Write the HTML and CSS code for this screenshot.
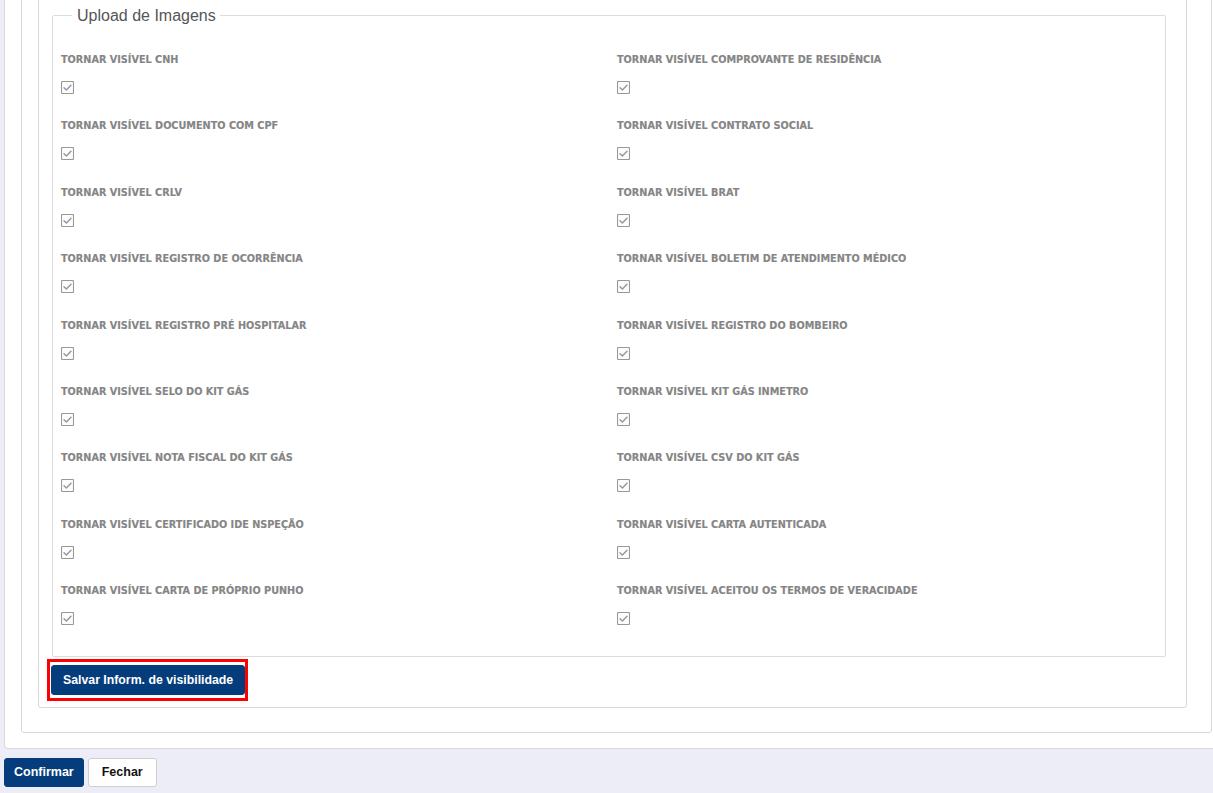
FILE: index.html
```html
<!DOCTYPE html>
<html lang="pt-BR">
<head>
<meta charset="utf-8">
<title>Upload de Imagens</title>
<link rel="stylesheet" href="styles.css">
</head>
<body>
<div class="page">
  <div class="card">
    <div class="panel">
      <div class="section">
        <fieldset class="uploads">
          <legend>Upload de Imagens</legend>
          <div class="grid">
            <div class="item"><span class="lbl">TORNAR VISÍVEL CNH</span><svg class="chk" viewBox="0 0 13 13"><rect x="0.5" y="0.5" width="12" height="12" rx="1"/><polyline points="3,6.7 5.4,9 10,4.2"/></svg></div>
            <div class="item"><span class="lbl">TORNAR VISÍVEL COMPROVANTE DE RESIDÊNCIA</span><svg class="chk" viewBox="0 0 13 13"><rect x="0.5" y="0.5" width="12" height="12" rx="1"/><polyline points="3,6.7 5.4,9 10,4.2"/></svg></div>
            <div class="item"><span class="lbl">TORNAR VISÍVEL DOCUMENTO COM CPF</span><svg class="chk" viewBox="0 0 13 13"><rect x="0.5" y="0.5" width="12" height="12" rx="1"/><polyline points="3,6.7 5.4,9 10,4.2"/></svg></div>
            <div class="item"><span class="lbl">TORNAR VISÍVEL CONTRATO SOCIAL</span><svg class="chk" viewBox="0 0 13 13"><rect x="0.5" y="0.5" width="12" height="12" rx="1"/><polyline points="3,6.7 5.4,9 10,4.2"/></svg></div>
            <div class="item"><span class="lbl">TORNAR VISÍVEL CRLV</span><svg class="chk" viewBox="0 0 13 13"><rect x="0.5" y="0.5" width="12" height="12" rx="1"/><polyline points="3,6.7 5.4,9 10,4.2"/></svg></div>
            <div class="item"><span class="lbl">TORNAR VISÍVEL BRAT</span><svg class="chk" viewBox="0 0 13 13"><rect x="0.5" y="0.5" width="12" height="12" rx="1"/><polyline points="3,6.7 5.4,9 10,4.2"/></svg></div>
            <div class="item"><span class="lbl">TORNAR VISÍVEL REGISTRO DE OCORRÊNCIA</span><svg class="chk" viewBox="0 0 13 13"><rect x="0.5" y="0.5" width="12" height="12" rx="1"/><polyline points="3,6.7 5.4,9 10,4.2"/></svg></div>
            <div class="item"><span class="lbl">TORNAR VISÍVEL BOLETIM DE ATENDIMENTO MÉDICO</span><svg class="chk" viewBox="0 0 13 13"><rect x="0.5" y="0.5" width="12" height="12" rx="1"/><polyline points="3,6.7 5.4,9 10,4.2"/></svg></div>
            <div class="item"><span class="lbl">TORNAR VISÍVEL REGISTRO PRÉ HOSPITALAR</span><svg class="chk" viewBox="0 0 13 13"><rect x="0.5" y="0.5" width="12" height="12" rx="1"/><polyline points="3,6.7 5.4,9 10,4.2"/></svg></div>
            <div class="item"><span class="lbl">TORNAR VISÍVEL REGISTRO DO BOMBEIRO</span><svg class="chk" viewBox="0 0 13 13"><rect x="0.5" y="0.5" width="12" height="12" rx="1"/><polyline points="3,6.7 5.4,9 10,4.2"/></svg></div>
            <div class="item"><span class="lbl">TORNAR VISÍVEL SELO DO KIT GÁS</span><svg class="chk" viewBox="0 0 13 13"><rect x="0.5" y="0.5" width="12" height="12" rx="1"/><polyline points="3,6.7 5.4,9 10,4.2"/></svg></div>
            <div class="item"><span class="lbl">TORNAR VISÍVEL KIT GÁS INMETRO</span><svg class="chk" viewBox="0 0 13 13"><rect x="0.5" y="0.5" width="12" height="12" rx="1"/><polyline points="3,6.7 5.4,9 10,4.2"/></svg></div>
            <div class="item"><span class="lbl">TORNAR VISÍVEL NOTA FISCAL DO KIT GÁS</span><svg class="chk" viewBox="0 0 13 13"><rect x="0.5" y="0.5" width="12" height="12" rx="1"/><polyline points="3,6.7 5.4,9 10,4.2"/></svg></div>
            <div class="item"><span class="lbl">TORNAR VISÍVEL CSV DO KIT GÁS</span><svg class="chk" viewBox="0 0 13 13"><rect x="0.5" y="0.5" width="12" height="12" rx="1"/><polyline points="3,6.7 5.4,9 10,4.2"/></svg></div>
            <div class="item"><span class="lbl">TORNAR VISÍVEL CERTIFICADO IDE NSPEÇÃO</span><svg class="chk" viewBox="0 0 13 13"><rect x="0.5" y="0.5" width="12" height="12" rx="1"/><polyline points="3,6.7 5.4,9 10,4.2"/></svg></div>
            <div class="item"><span class="lbl">TORNAR VISÍVEL CARTA AUTENTICADA</span><svg class="chk" viewBox="0 0 13 13"><rect x="0.5" y="0.5" width="12" height="12" rx="1"/><polyline points="3,6.7 5.4,9 10,4.2"/></svg></div>
            <div class="item"><span class="lbl">TORNAR VISÍVEL CARTA DE PRÓPRIO PUNHO</span><svg class="chk" viewBox="0 0 13 13"><rect x="0.5" y="0.5" width="12" height="12" rx="1"/><polyline points="3,6.7 5.4,9 10,4.2"/></svg></div>
            <div class="item"><span class="lbl">TORNAR VISÍVEL ACEITOU OS TERMOS DE VERACIDADE</span><svg class="chk" viewBox="0 0 13 13"><rect x="0.5" y="0.5" width="12" height="12" rx="1"/><polyline points="3,6.7 5.4,9 10,4.2"/></svg></div>
          </div>
        </fieldset>
        <div class="save-wrap"><button class="btn btn-primary btn-save">Salvar Inform. de visibilidade</button></div>
      </div>
    </div>
  </div>
  <div class="footer">
    <button class="btn btn-primary btn-confirm">Confirmar</button>
    <button class="btn btn-default btn-close">Fechar</button>
  </div>
</div>
</body>
</html>
```

FILE: styles.css
```css
html, body {
  margin: 0;
  padding: 0;
}
body {
  background: #ededf7;
  font-family: "Liberation Sans", Arial, sans-serif;
  overflow: hidden;
  height: 793px;
}
.page {
  width: 1213px;
}
.card {
  margin: -40px -16px 0 4px;
  background: #fff;
  border: 1px solid #d8d8d8;
  border-radius: 4px;
  padding: 16px 16px 15px 16px;
}
.panel {
  border: 1px solid #d8d8d8;
  border-radius: 3px;
  padding: 16px 24px 24px 16px;
}
.section {
  border: 1px solid #d8d8d8;
  border-radius: 3px;
  padding: 11px 20px 6px 13px;
}
.uploads {
  margin: 0;
  border: 1px solid #dcdcdc;
  border-radius: 2px;
  padding: 28px 8px 5px 8px;
  min-width: 0;
}
.uploads legend {
  margin-left: 11px;
  padding: 0 4px 0 5px;
  font-size: 16px;
  line-height: 19px;
  color: #555;
}
.grid {
  display: grid;
  grid-template-columns: 556px 1fr;
  grid-auto-rows: 66.4px;
}
.item {
  display: flex;
  flex-direction: column;
  align-items: flex-start;
}
.lbl {
  font-family: "DejaVu Sans", Verdana, sans-serif;
  font-weight: bold;
  font-size: 9.7px;
  line-height: 14px;
  color: #858585;
  -webkit-text-stroke: 0.15px #858585;
}
.chk {
  width: 13px;
  height: 13px;
  margin-top: 14px;
  display: block;
}
.chk rect {
  fill: #fdfdfd;
  stroke: #9d978f;
  stroke-width: 1.1;
}
.chk polyline {
  fill: none;
  stroke: #8c99a6;
  stroke-width: 1.4;
  stroke-linecap: round;
  stroke-linejoin: round;
}
.save-wrap {
  display: inline-block;
  margin: 2px 0 0 -5px;
  border: 3px solid #f00;
  padding: 3px 0 3px 1px;
  vertical-align: top;
}
.btn {
  font-family: "Liberation Sans", Arial, sans-serif;
  font-weight: bold;
  border-radius: 3px;
  cursor: pointer;
  display: block;
}
.btn-primary {
  background: #053d7c;
  border: 1px solid #053d7c;
  color: #fff;
}
.btn-default {
  background: #fff;
  border: 1px solid #cfcfcf;
  color: #111;
}
.btn-save {
  height: 30px;
  padding: 0 11px;
  font-size: 12.3px;
}
.footer {
  display: flex;
  gap: 4px;
  margin-top: 9px;
  padding-left: 4px;
}
.btn-confirm {
  height: 29px;
  padding: 0 9px;
  font-size: 12.5px;
}
.btn-close {
  height: 29px;
  padding: 0 13px;
  font-size: 12.5px;
}
```
